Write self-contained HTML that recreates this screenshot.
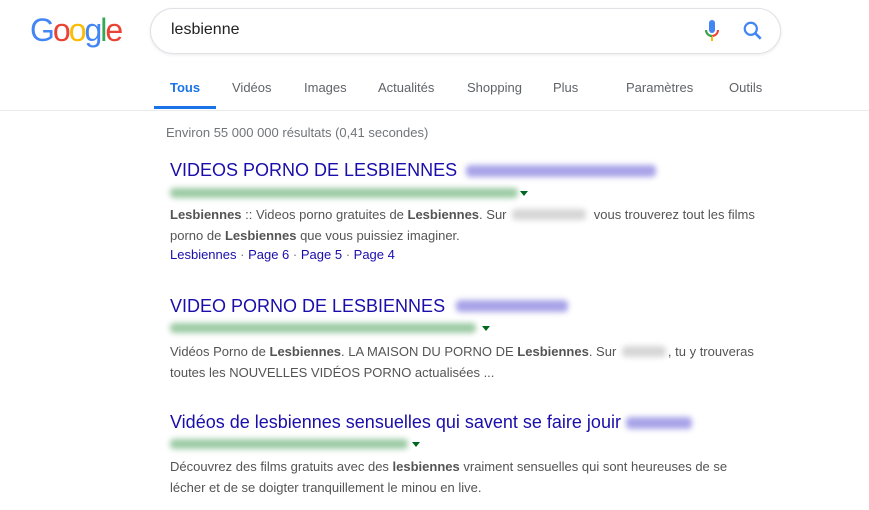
<!DOCTYPE html>
<html><head><meta charset="utf-8"><style>
*{margin:0;padding:0;box-sizing:border-box}
body{width:869px;height:510px;background:#fff;font-family:"Liberation Sans",Arial,sans-serif;position:relative;overflow:hidden}
.a{position:absolute;white-space:nowrap}
.logo{left:30px;top:12px;font-size:32px;letter-spacing:-2px;font-family:"Liberation Sans",sans-serif}
.box{left:150px;top:8px;width:631px;height:46px;border:1px solid #dfe1e5;border-radius:23px;box-shadow:0 1px 3px rgba(0,0,0,.08)}
.q{left:171px;top:21px;font-size:16px;color:#222}
.tab{top:80px;font-size:13px;color:#5f6368}
.ul{left:154px;top:106px;width:62px;height:3px;background:#1a73e8}
.hr{left:0;top:110px;width:869px;height:1px;background:#ebebeb}
.stats{left:166px;top:125px;font-size:13px;color:#70757a}
.t{font-size:18px;color:#1a0dab;left:170px}
.s{font-size:13px;color:#545454;left:170px}
.s b{color:#545454}
.bl{position:absolute;border-radius:4px;filter:blur(3px)}
.arr{position:absolute;width:0;height:0;border-left:4px solid transparent;border-right:4px solid transparent;border-top:5px solid #006621}
.sl{font-size:13px;color:#1a0dab;left:170px}
.sl span{color:#70757a}
</style></head><body>
<div class="a logo"><span style="color:#4285f4">G</span><span style="color:#ea4335">o</span><span style="color:#fbbc05">o</span><span style="color:#4285f4">g</span><span style="color:#34a853">l</span><span style="color:#ea4335">e</span></div>
<div class="a box"></div>
<div class="a q">lesbienne</div>
<svg class="a" style="left:703px;top:19px" width="18" height="24" viewBox="0 0 18 24"><rect x="6" y="1" width="6" height="13" rx="3" fill="#4285f4"/><path d="M3 11a6 6 0 0 0 12 0" stroke="#ea4335" stroke-width="2" fill="none"/><rect x="8" y="17" width="2" height="5" fill="#fbbc05"/><path d="M3 11a6 6 0 0 0 6 6" stroke="#34a853" stroke-width="2" fill="none"/></svg>
<svg class="a" style="left:742px;top:20px" width="22" height="22" viewBox="0 0 20 20"><circle cx="8" cy="8" r="5.5" stroke="#4285f4" stroke-width="2" fill="none"/><path d="M12 12l5 5" stroke="#4285f4" stroke-width="2.4"/></svg>
<div class="a tab" style="left:170px;color:#1a73e8;font-weight:bold">Tous</div>
<div class="a tab" style="left:232px">Vidéos</div>
<div class="a tab" style="left:304px">Images</div>
<div class="a tab" style="left:378px">Actualités</div>
<div class="a tab" style="left:467px">Shopping</div>
<div class="a tab" style="left:553px">Plus</div>
<div class="a tab" style="left:626px">Paramètres</div>
<div class="a tab" style="left:729px">Outils</div>
<div class="a ul"></div><div class="a hr"></div>
<div class="a stats">Environ 55 000 000 résultats (0,41 secondes)</div>

<div class="a t" style="top:160px">VIDEOS PORNO DE LESBIENNES</div>
<div class="bl" style="left:466px;top:165px;width:190px;height:12px;background:#a7a3e8"></div>
<div class="bl" style="left:170px;top:188px;width:348px;height:10px;background:#9ccaa4"></div>
<div class="arr" style="left:520px;top:191px"></div>
<div class="a s" style="top:207px"><b>Lesbiennes</b> :: Videos porno gratuites de <b>Lesbiennes</b>. Sur <span style="display:inline-block;width:80px"></span> vous trouverez tout les films</div>
<div class="bl" style="left:512px;top:209px;width:74px;height:11px;background:#d6d6d6"></div>
<div class="a s" style="top:228px">porno de <b>Lesbiennes</b> que vous puissiez imaginer.</div>
<div class="a sl" style="top:247px">Lesbiennes <span>·</span> Page 6 <span>·</span> Page 5 <span>·</span> Page 4</div>

<div class="a t" style="top:296px">VIDEO PORNO DE LESBIENNES</div>
<div class="bl" style="left:456px;top:300px;width:112px;height:12px;background:#a7a3e8"></div>
<div class="bl" style="left:170px;top:323px;width:306px;height:10px;background:#9ccaa4"></div>
<div class="arr" style="left:482px;top:326px"></div>
<div class="a s" style="top:344px">Vidéos Porno de <b>Lesbiennes</b>. LA MAISON DU PORNO DE <b>Lesbiennes</b>. Sur <span style="display:inline-block;width:48px"></span>, tu y trouveras</div>
<div class="bl" style="left:622px;top:346px;width:44px;height:11px;background:#d6d6d6"></div>
<div class="a s" style="top:365px">toutes les NOUVELLES VIDÉOS PORNO actualisées ...</div>

<div class="a t" style="top:412px">Vidéos de lesbiennes sensuelles qui savent se faire jouir</div>
<div class="bl" style="left:626px;top:417px;width:66px;height:12px;background:#a7a3e8"></div>
<div class="bl" style="left:170px;top:439px;width:238px;height:10px;background:#9ccaa4"></div>
<div class="arr" style="left:412px;top:442px"></div>
<div class="a s" style="top:459px">Découvrez des films gratuits avec des <b>lesbiennes</b> vraiment sensuelles qui sont heureuses de se</div>
<div class="a s" style="top:480px">lécher et de se doigter tranquillement le minou en live.</div>
</body></html>
